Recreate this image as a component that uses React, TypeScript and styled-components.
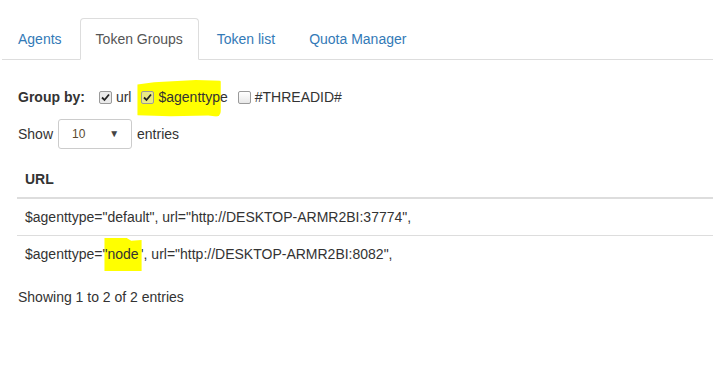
import styled, { createGlobalStyle } from "styled-components";

const GlobalStyle = createGlobalStyle`
  html, body {
    margin: 0;
    padding: 0;
    background: #fff;
  }
  body {
    font-family: "Liberation Sans", Arial, Helvetica, sans-serif;
    font-size: 14px;
    line-height: 20px;
    color: #333;
  }
`;

const Page = styled.div`
  padding-top: 18px;
`;

// Tabs
const TabBar = styled.ul`
  display: flex;
  list-style: none;
  margin: 0 0 0 2px;
  padding: 0;
  border-bottom: 1px solid #ddd;
`;

const TabItem = styled.li`
  margin-bottom: -1px;
`;

const TabLink = styled.a<{ $active?: boolean }>`
  display: block;
  margin-right: 2px;
  padding: 10px 15px;
  line-height: 20px;
  border: 1px solid ${(p) => (p.$active ? "#ddd" : "transparent")};
  border-bottom-color: transparent;
  border-radius: 4px 4px 0 0;
  background: ${(p) => (p.$active ? "#fff" : "transparent")};
  color: ${(p) => (p.$active ? "#555" : "#337ab7")};
  text-decoration: none;
  cursor: pointer;
`;

const Content = styled.div`
  padding: 27px 0 0 18px;
`;

// Group by row
const GroupRow = styled.div`
  display: flex;
  align-items: center;
  height: 20px;
`;

const GroupLabel = styled.span`
  font-weight: bold;
  margin-right: 14px;
`;

const Option = styled.label<{ $marked?: boolean }>`
  position: relative;
  display: inline-flex;
  align-items: center;
  gap: 4px;
  margin-right: 10px;
  z-index: 0;

  &::before {
    content: "";
    display: ${(p) => (p.$marked ? "block" : "none")};
    position: absolute;
    left: -4px;
    right: 7px;
    top: -7px;
    bottom: -10px;
    background: #ffff00;
    border-radius: 3px 2px 6px 2px;
    clip-path: polygon(0 12%, 20% 6%, 70% 0, 100% 2%, 100% 100%, 85% 96%, 40% 98%, 0 95%);
    z-index: -1;
  }
`;

const Box = styled.span<{ $checked?: boolean }>`
  display: inline-flex;
  align-items: center;
  justify-content: center;
  box-sizing: border-box;
  width: 13px;
  height: 13px;
  border: 1px solid #9a9a9a;
  border-radius: 2px;
  background: ${(p) =>
    p.$checked ? "rgba(220, 220, 220, 0.6)" : "linear-gradient(#fff, #e8e8e8)"};
`;

const Check = ({ checked }: { checked?: boolean }) => (
  <Box $checked={checked}>
    {checked && (
      <svg width="9" height="9" viewBox="0 0 9 9">
        <path d="M1 4.5 L3.5 7 L8 1.5" fill="none" stroke="#222" strokeWidth="1.8" />
      </svg>
    )}
  </Box>
);

// Show entries row
const ShowRow = styled.div`
  display: flex;
  align-items: center;
  gap: 5px;
  margin-top: 12px;
  height: 30px;
`;

const Select = styled.div`
  box-sizing: border-box;
  display: flex;
  align-items: center;
  justify-content: space-between;
  width: 74px;
  height: 30px;
  padding: 0 12px 0 13px;
  border: 1px solid #ccc;
  border-radius: 3px;
  font-size: 12px;
  color: #5a4a30;
`;

const Caret = styled.span`
  font-size: 10px;
  color: #444;
`;

// Table
const Table = styled.table`
  width: calc(100% + 1px);
  margin: 12px 0 0 -1px;
  border-collapse: collapse;
  border-spacing: 0;
`;

const Th = styled.th`
  text-align: left;
  padding: 8px;
  line-height: 20px;
  font-weight: bold;
  border-bottom: 2px solid #ddd;
`;

const Td = styled.td`
  padding: 8px;
  line-height: 20px;
  border-top: 1px solid #ddd;
`;

const Mark = styled.span`
  position: relative;
  z-index: 0;

  &::before {
    content: "";
    position: absolute;
    left: 2px;
    right: -3px;
    top: -8px;
    bottom: -9px;
    background: #ffff00;
    clip-path: polygon(0 0, 60% 0, 72% 8%, 100% 6%, 100% 100%, 0 100%);
    z-index: -1;
  }
`;

const Info = styled.div`
  margin-top: 15px;
`;

export default function App() {
  const tabs = ["Agents", "Token Groups", "Token list", "Quota Manager"];
  return (
    <Page>
      <GlobalStyle />
      <TabBar>
        {tabs.map((t) => (
          <TabItem key={t}>
            <TabLink $active={t === "Token Groups"}>{t}</TabLink>
          </TabItem>
        ))}
      </TabBar>
      <Content>
        <GroupRow>
          <GroupLabel>Group by:</GroupLabel>
          <Option>
            <Check checked />
            url
          </Option>
          <Option $marked>
            <Check checked />
            $agenttype
          </Option>
          <Option>
            <Check />
            #THREADID#
          </Option>
        </GroupRow>
        <ShowRow>
          Show
          <Select>
            10
            <Caret>▼</Caret>
          </Select>
          entries
        </ShowRow>
        <Table>
          <thead>
            <tr>
              <Th>URL</Th>
            </tr>
          </thead>
          <tbody>
            <tr>
              <Td>$agenttype="default", url="http://DESKTOP-ARMR2BI:37774",</Td>
            </tr>
            <tr>
              <Td>
                $agenttype=<Mark>"node</Mark>", url="http://DESKTOP-ARMR2BI:8082",
              </Td>
            </tr>
          </tbody>
        </Table>
        <Info>Showing 1 to 2 of 2 entries</Info>
      </Content>
    </Page>
  );
}
